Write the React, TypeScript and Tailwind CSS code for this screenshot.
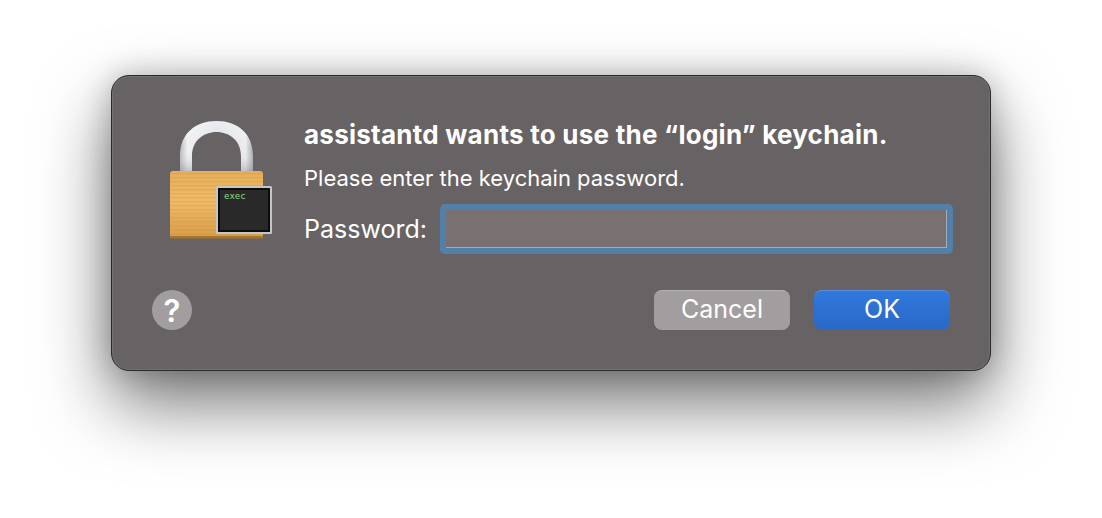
import React from 'react';

const LockIcon: React.FC = () => (
  <svg width="108" height="124" viewBox="0 0 108 124" className="shrink-0">
    <defs>
      <linearGradient id="shackle" x1="0" y1="0" x2="1" y2="0">
        <stop offset="0" stopColor="#b4b7bd" />
        <stop offset="0.1" stopColor="#eef0f3" />
        <stop offset="0.5" stopColor="#dfe1e6" />
        <stop offset="0.9" stopColor="#e9ebee" />
        <stop offset="1" stopColor="#a5a8ae" />
      </linearGradient>
      <linearGradient id="shackleShade" x1="0" y1="0" x2="0" y2="1">
        <stop offset="0" stopColor="#ffffff" stopOpacity="0.35" />
        <stop offset="0.55" stopColor="#ffffff" stopOpacity="0" />
        <stop offset="1" stopColor="#8a8d94" stopOpacity="0.45" />
      </linearGradient>
      <linearGradient id="body" x1="0" y1="0" x2="0" y2="1">
        <stop offset="0" stopColor="#e5ae58" />
        <stop offset="0.45" stopColor="#f0bb68" />
        <stop offset="1" stopColor="#d89c46" />
      </linearGradient>
      <pattern id="ridges" width="4" height="4" patternUnits="userSpaceOnUse">
        <rect width="4" height="1.4" fill="#c98f3e" opacity="0.28" />
      </pattern>
    </defs>
    <path
      d="M13 54 V39 C13 16 29 4 49.5 4 C70 4 86 16 86 39 V54 H74 V39 C74 24 63 15 49.5 15 C36 15 25 24 25 39 V54 Z"
      fill="url(#shackle)"
    />
    <path
      d="M13 54 V39 C13 16 29 4 49.5 4 C70 4 86 16 86 39 V54 H74 V39 C74 24 63 15 49.5 15 C36 15 25 24 25 39 V54 Z"
      fill="url(#shackleShade)"
    />
    <rect x="3" y="54" width="93" height="67" rx="3" fill="url(#body)" />
    <rect x="3" y="54" width="93" height="67" rx="3" fill="url(#ridges)" />
    <rect x="3" y="119" width="93" height="2.5" rx="1" fill="#a8742c" />
    <rect x="49" y="69" width="56" height="48" rx="1.5" fill="#c4c6c9" />
    <rect x="51" y="71" width="52" height="44" fill="#0c0c0c" />
    <rect x="53" y="73" width="48" height="40" fill="#292929" />
    <text x="57" y="82" fontSize="9" fontFamily="'DejaVu Sans Mono', monospace" fill="#86dc86">
      exec
    </text>
  </svg>
);

const App: React.FC = () => {
  return (
    <div className="w-[1102px] h-[518px] bg-white overflow-hidden pt-[75px] pl-[111px] font-['Inter','Noto_Sans',sans-serif] text-white">
      <div className="w-[880px] h-[296px] rounded-[18px] bg-[#676263] border border-[#2b2a2a] shadow-[0_0_0_1px_rgba(150,150,150,0.3)_inset,0_32px_70px_rgba(0,0,0,0.55),0_0_30px_rgba(0,0,0,0.22)] flex flex-col">
        {/* Message area */}
        <div className="flex pt-[41px] pl-[55px]">
          <LockIcon />
          <div className="ml-[29px] mt-[3px] flex flex-col">
            <h1 className="text-[26px] leading-[30px] font-bold whitespace-nowrap tracking-[0.25px]">
              assistantd wants to use the “login” keychain.
            </h1>
            <p className="mt-[15px] text-[22px] leading-[26px] whitespace-nowrap">
              Please enter the keychain password.
            </p>
            <div className="mt-[13px] flex items-center">
              <label className="text-[25px] leading-[30px] whitespace-nowrap">Password:</label>
              <div className="ml-[13px] w-[513px] h-[50px] rounded-[5px] bg-[#5380a9] p-[6px]">
                <div className="w-full h-full bg-[#797071] border-b border-r border-[#a4acb8]" />
              </div>
            </div>
          </div>
        </div>

        {/* Buttons */}
        <div className="mt-[36px] flex items-start pl-[40px] pr-[40px]">
          <button className="w-[40px] h-[40px] rounded-full bg-[#a29d9e] text-[31px] font-semibold leading-none flex items-center justify-center">
            ?
          </button>
          <button className="ml-auto w-[136px] h-[40px] pb-[2px] rounded-[8px] bg-[#a29d9e] border-t border-[#b5b0b1] text-[25px] leading-none flex items-center justify-center">
            Cancel
          </button>
          <button className="ml-[24px] w-[136px] h-[40px] pb-[2px] rounded-[8px] bg-gradient-to-b from-[#2f78dc] to-[#2a69c6] border-t border-[#5a8fdc] text-[25px] leading-none flex items-center justify-center">
            OK
          </button>
        </div>
      </div>
    </div>
  );
};

export default App;
